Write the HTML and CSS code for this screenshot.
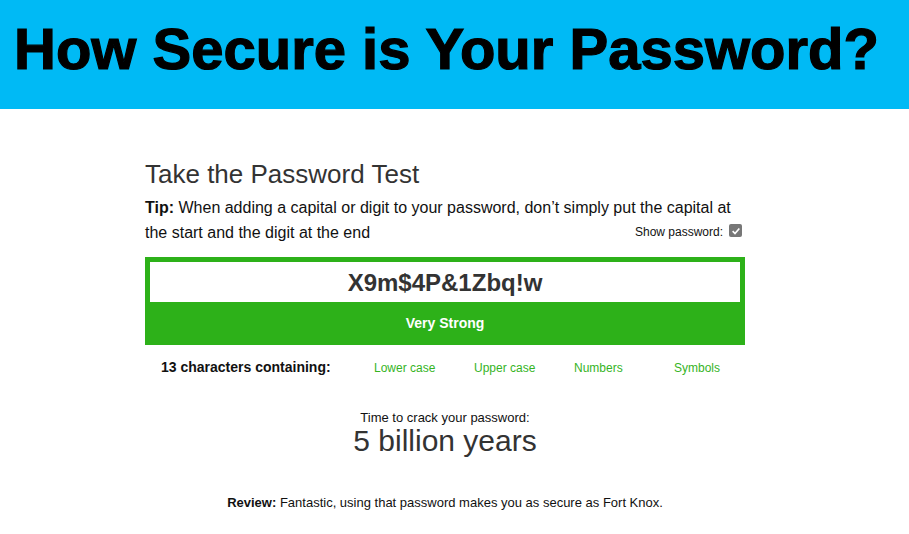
FILE: index.html
```html
<!DOCTYPE html>
<html>
<head>
<meta charset="utf-8">
<link rel="stylesheet" href="styles.css">
</head>
<body>
<header class="banner">
  <h1 class="banner-title">How Secure is Your Password?</h1>
</header>
<main class="tester">
  <h2 class="tester-heading">Take the Password Test</h2>
  <p class="tip"><strong>Tip:</strong> When adding a capital or digit to your password, don’t simply put the capital at the start and the digit at the end<label class="show">Show password: <span class="check"><svg viewBox="0 0 12 12" width="10" height="10"><path d="M2 6.2 L4.8 9 L10 3" fill="none" stroke="#fff" stroke-width="2"/></svg></span></label></p>
  <div class="meter">
    <div class="pw-field">X9m$4P&amp;1Zbq!w</div>
    <div class="strength">Very Strong</div>
  </div>
  <div class="criteria">
    <div class="count">13 characters containing:</div>
    <div class="crit">Lower case</div>
    <div class="crit">Upper case</div>
    <div class="crit">Numbers</div>
    <div class="crit">Symbols</div>
  </div>
  <div class="crack">
    <div class="crack-label">Time to crack your password:</div>
    <div class="crack-time">5 billion years</div>
  </div>
  <p class="review"><strong>Review:</strong> Fantastic, using that password makes you as secure as Fort Knox.</p>
</main>
</body>
</html>
```
FILE: styles.css
```css
* { box-sizing: border-box; }
body {
  margin: 0;
  font-family: "Liberation Sans", Arial, sans-serif;
  background: #fff;
  color: #111;
}
.banner {
  background: #00baf5;
  height: 109px;
  padding: 16px 0 0 14px;
}
.banner-title {
  margin: 0;
  font-size: 58px;
  line-height: 66px;
  font-weight: 700;
  color: #000;
  -webkit-text-stroke: 1.2px #000;
}
.tester {
  width: 600px;
  margin-left: 145px;
  padding-top: 49px;
}
.tester-heading {
  margin: 0;
  font-size: 26px;
  font-weight: 400;
  color: #333;
  line-height: 32px;
}
.tip {
  margin: 5px 0 0;
  font-size: 16px;
  line-height: 25px;
  color: #111;
}
.show {
  float: right;
  margin-right: 3px;
  font-size: 12px;
  line-height: 25px;
  color: #111;
  display: flex;
  align-items: center;
  gap: 6px;
}
.check {
  width: 13px;
  height: 13px;
  background: #777;
  border-radius: 2px;
  display: inline-flex;
  align-items: center;
  justify-content: center;
  margin-top: -4px;
}
.meter {
  margin-top: 12px;
  background: #2db119;
  padding: 5px 5px 0;
}
.pw-field {
  background: #fff;
  height: 40px;
  text-align: center;
  font-size: 24px;
  font-weight: 700;
  color: #333;
  line-height: 41px;
}
.strength {
  height: 43px;
  line-height: 43px;
  text-align: center;
  color: #fff;
  font-weight: 700;
  font-size: 14px;
}
.criteria {
  display: grid;
  grid-template-columns: 229px 100px 100px 100px 100px;
  align-items: center;
  margin-top: 14px;
}
.count {
  font-weight: 700;
  font-size: 14px;
  padding-left: 16px;
}
.crit {
  font-size: 12px;
  color: #36b41f;
  padding-top: 2px;
}
.crack {
  text-align: center;
  margin-top: 35px;
}
.crack-label {
  font-size: 13px;
  line-height: 15px;
}
.crack-time {
  font-size: 30px;
  line-height: 32px;
  color: #333;
}
.review {
  text-align: center;
  font-size: 13px;
  margin: 38px 0 0;
}
```
